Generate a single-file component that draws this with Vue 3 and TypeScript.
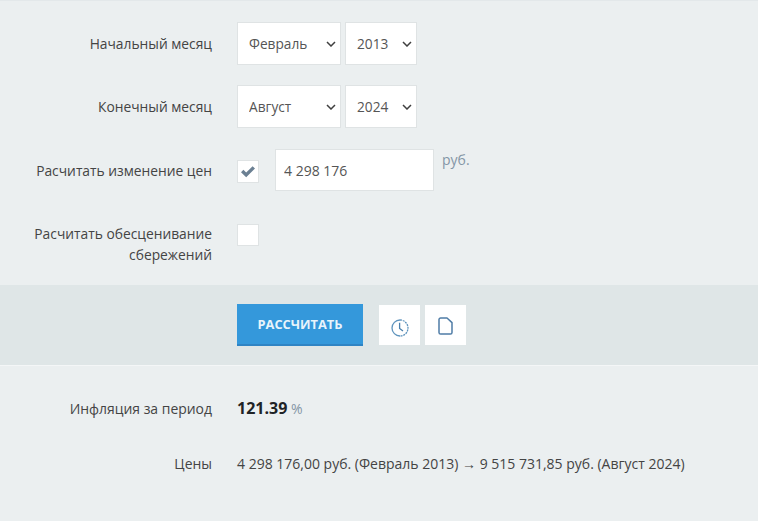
<template>
  <div class="page">
    <form class="form" @submit.prevent>
      <div class="row row-select">
        <label class="label">Начальный месяц</label>
        <div class="field">
          <div class="select-wrap">
            <select v-model="startMonth" class="select month">
              <option v-for="m in months" :key="m">{{ m }}</option>
            </select>
            <svg class="chevron" width="10" height="6" viewBox="0 0 10 6"><path d="M1 1 5 5 9 1" /></svg>
          </div>
          <div class="select-wrap">
            <select v-model="startYear" class="select year">
              <option v-for="y in years" :key="y">{{ y }}</option>
            </select>
            <svg class="chevron" width="10" height="6" viewBox="0 0 10 6"><path d="M1 1 5 5 9 1" /></svg>
          </div>
        </div>
      </div>
      <div class="row row-select">
        <label class="label">Конечный месяц</label>
        <div class="field">
          <div class="select-wrap">
            <select v-model="endMonth" class="select month">
              <option v-for="m in months" :key="m">{{ m }}</option>
            </select>
            <svg class="chevron" width="10" height="6" viewBox="0 0 10 6"><path d="M1 1 5 5 9 1" /></svg>
          </div>
          <div class="select-wrap">
            <select v-model="endYear" class="select year">
              <option v-for="y in years" :key="y">{{ y }}</option>
            </select>
            <svg class="chevron" width="10" height="6" viewBox="0 0 10 6"><path d="M1 1 5 5 9 1" /></svg>
          </div>
        </div>
      </div>
      <div class="row row-price">
        <label class="label">Расчитать изменение цен</label>
        <div class="field field-price">
          <span class="check" @click="priceOn = !priceOn">
            <svg v-if="priceOn" width="16" height="13" viewBox="0 0 16 13">
              <path d="M1 7.2 3.4 4.8 6.2 7.6 12.6 1.2 15 3.6 6.2 12.2Z" fill="#6b8093" />
            </svg>
          </span>
          <input v-model="amount" class="input" type="text" />
          <span class="unit">руб.</span>
        </div>
      </div>
      <div class="row row-savings">
        <label class="label">Расчитать обесценивание<br />сбережений</label>
        <div class="field">
          <span class="check" @click="savingsOn = !savingsOn">
            <svg v-if="savingsOn" width="16" height="13" viewBox="0 0 16 13">
              <path d="M1 7.2 3.4 4.8 6.2 7.6 12.6 1.2 15 3.6 6.2 12.2Z" fill="#6b8093" />
            </svg>
          </span>
        </div>
      </div>
      <div class="actions">
        <button class="submit" type="submit">РАССЧИТАТЬ</button>
        <button class="icon-btn history" type="button" aria-label="История">
          <svg width="18" height="18" viewBox="0 0 18 18" fill="none" stroke="#5f94bd" stroke-width="1.3">
            <path d="M9 1a8 8 0 0 0 0 16" />
            <path d="M9 1a8 8 0 0 1 0 16" stroke-dasharray="2 0.8" />
            <path d="M8.6 3.8V9.4L12 12" stroke="#4a80ad" />
          </svg>
        </button>
        <button class="icon-btn doc" type="button" aria-label="Документ">
          <svg width="15" height="18" viewBox="0 0 15 18" fill="none" stroke="#4f7ca6" stroke-width="1.5" stroke-linejoin="round">
            <path d="M2.6 1H9L14 5.6V15.4A1.6 1.6 0 0 1 12.4 17H2.6A1.6 1.6 0 0 1 1 15.4V2.6A1.6 1.6 0 0 1 2.6 1Z" />
          </svg>
        </button>
      </div>
    </form>
    <div class="results">
      <div class="result">
        <span class="label">Инфляция за период</span>
        <span class="value"><b class="big">121.39</b> <span class="percent">%</span></span>
      </div>
      <div class="result result-prices">
        <span class="label">Цены</span>
        <span class="value">4 298 176,00 руб. (Февраль 2013) <span class="arrow">→</span> 9 515 731,85 руб. (Август 2024)</span>
      </div>
    </div>
  </div>
</template>

<script setup lang="ts">
import { ref } from 'vue'

const months = ['Январь', 'Февраль', 'Март', 'Апрель', 'Май', 'Июнь', 'Июль', 'Август', 'Сентябрь', 'Октябрь', 'Ноябрь', 'Декабрь']
const years = Array.from({ length: 14 }, (_, i) => 2011 + i)

const startMonth = ref('Февраль')
const startYear = ref(2013)
const endMonth = ref('Август')
const endYear = ref(2024)
const amount = ref('4 298 176')
const priceOn = ref(true)
const savingsOn = ref(false)
</script>

<style>
html,
body {
  background: #ebeff0;
}
</style>

<style scoped>
.page {
  height: 521px;
  overflow: hidden;
  box-sizing: border-box;
  border-top: 1px solid #e3e8ea;
  background: #ebeff0;
  font-family: 'Open Sans', 'Noto Sans', sans-serif;
  font-size: 14px;
  color: #444;
}
.row {
  display: flex;
  align-items: flex-start;
}
.row-select {
  height: 63px;
}
.row-select:first-child {
  padding-top: 21px;
}
.label {
  width: 212px;
  flex: none;
  text-align: right;
  line-height: 21px;
  font-size: 13.8px;
}
.row-select .label {
  padding-top: 11px;
}
.field {
  display: flex;
  margin-left: 25px;
}
.select-wrap {
  position: relative;
  display: flex;
}
.select-wrap + .select-wrap {
  margin-left: 4px;
}
.select {
  height: 43px;
  box-sizing: border-box;
  border: 1px solid #dfe3e4;
  border-radius: 0;
  background: #fff;
  font: inherit;
  font-size: 13.7px;
  color: #555;
  padding: 0 0 0 11px;
  outline: none;
  appearance: none;
}
.chevron {
  position: absolute;
  right: 5px;
  top: 19px;
  fill: none;
  stroke: #3f3f3f;
  stroke-width: 1.5;
  pointer-events: none;
}
.month {
  width: 104px;
}
.year {
  width: 72px;
}
.row-price {
  height: 74px;
  padding-top: 1px;
}
.row-price .label {
  padding-top: 11px;
}
.field-price {
  align-items: flex-start;
}
.check {
  width: 22px;
  height: 23px;
  margin-top: 11px;
  box-sizing: border-box;
  border: 1px solid #dfe3e4;
  background: #fff;
  display: flex;
  align-items: center;
  justify-content: center;
  cursor: pointer;
}
.input {
  width: 159px;
  height: 42px;
  box-sizing: border-box;
  margin-left: 16px;
  border: 1px solid #dfe3e4;
  background: #fff;
  padding: 0 8px;
  font: inherit;
  color: #555;
  outline: none;
}
.unit {
  margin-left: 8px;
  line-height: 22px;
  color: #8496a6;
}
.row-savings {
  height: 62px;
}
.row-savings .check {
  margin-top: 1px;
  height: 22px;
}
.actions {
  display: flex;
  align-items: center;
  height: 81px;
  box-sizing: border-box;
  padding-left: 237px;
  padding-bottom: 1px;
  background: #dfe6e7;
  border-bottom: 1px solid #f4f6f7;
}
.submit {
  width: 126px;
  height: 42px;
  border: 0;
  border-bottom: 2px solid #2f84c4;
  background: #3498db;
  color: #e8f4fb;
  font: inherit;
  font-size: 12.8px;
  font-weight: 700;
  cursor: pointer;
}
.icon-btn {
  width: 41px;
  height: 40px;
  border: 0;
  background: #fff;
  margin-left: 5px;
  padding: 0;
  display: flex;
  align-items: center;
  justify-content: center;
  cursor: pointer;
}
.history {
  margin-left: 16px;
}
.history svg {
  margin-top: 6px;
}
.doc svg {
  margin-top: 2px;
}
.results {
  padding-top: 32px;
}
.result {
  display: flex;
  align-items: baseline;
  line-height: 20px;
}
.result .label {
  font-size: 13.95px;
}
.result .value {
  margin-left: 25px;
}
.result-prices {
  margin-top: 34px;
}
.big {
  font-size: 16px;
  font-weight: 700;
  color: #1f2326;
}
.percent {
  color: #8496a6;
}
.arrow {
  font-family: 'Liberation Sans', sans-serif;
}
</style>
